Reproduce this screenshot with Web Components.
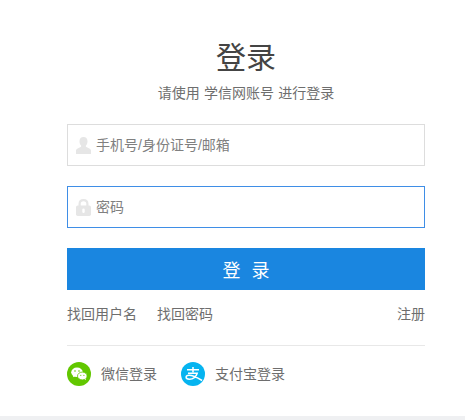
<!DOCTYPE html>
<html lang="zh"><head><meta charset="utf-8"><title>登录</title>
<style>
html,body{margin:0;padding:0;background:#fff}
body{width:465px;height:420px;overflow:hidden;font-family:"Noto Sans CJK SC","Liberation Sans",sans-serif;color:#666}
</style></head><body>
<login-page>
  <login-heading title-text="登录" sub="请使用 学信网账号 进行登录"></login-heading>
  <login-field icon="user" placeholder="手机号/身份证号/邮箱"></login-field>
  <login-field icon="lock" placeholder="密码" focused></login-field>
  <login-button>登 录</login-button>
  <login-links></login-links>
  <login-social></login-social>
</login-page>
<script>
function def(name, html){
  customElements.define(name, class extends HTMLElement{
    connectedCallback(){
      if(this.shadowRoot) return;
      const r=this.attachShadow({mode:"open"});
      r.innerHTML=typeof html==="function"?html(this):html;
    }
  });
}
def("login-page",`<style>
:host{display:flex;flex-direction:column;box-sizing:border-box;width:465px;height:420px;padding:0 40px 4px 67px;position:relative}
.band{position:absolute;left:0;right:0;bottom:0;height:4px;background:#eff0f2}
</style><slot></slot><div class="band"></div>`);
def("login-heading",el=>`<style>
:host{display:flex;flex-direction:column;align-items:center;height:124px;box-sizing:border-box;padding-top:34px}
h1{margin:0;font:400 30px/42px "Noto Sans CJK SC",sans-serif;color:#444}
p{margin:5px 0 0;font:400 14px/22px "Noto Sans CJK SC",sans-serif;color:#6e6e6e;word-spacing:1px}
</style><h1>${el.getAttribute("title-text")}</h1><p>${el.getAttribute("sub")}</p>`);
const icons={
 user:`<svg width="15" height="17" viewBox="0 0 15 17"><path fill="#e6e6e6" d="M7.500 0C10 0 11.500 1.500 11.500 4.200c0 1.800-.6 3.300-1.500 4.300-.4.500-.2 1.200.4 1.500l3 1.400c1 .5 1.600 1.200 1.600 2.200V17H0v-3.400c0-1 .6-1.700 1.600-2.200l3-1.400c.6-.3.800-1 .4-1.500-.9-1-1.500-2.500-1.500-4.300C3.500 1.500 5 0 7.500 0z"/></svg>`,
 lock:`<svg width="15" height="17" viewBox="0 0 15 17"><path fill="none" stroke="#e6e6e6" stroke-width="2.200" d="M3.600 8V4.800C3.600 2.500 5.200 1.100 7.500 1.100s3.900 1.400 3.900 3.700V8"/><rect y="6.500" width="15" height="10.500" rx="1.800" fill="#e6e6e6"/><rect x="6.300" y="9.500" width="2.400" height="4.500" rx="1.200" fill="#fff"/></svg>`
};
def("login-field",el=>`<style>
:host{display:flex;align-items:center;box-sizing:border-box;height:42px;margin-bottom:20px;padding-left:8px;gap:5px;background:#fff;border:1px solid ${el.hasAttribute("focused")?"#3f8ee6":"#ddd"}}
.i{width:15px;display:flex;justify-content:center;flex:none}
svg{display:block}
span{font:400 14px/20px "Liberation Sans","Noto Sans CJK SC",sans-serif;color:#808080}
</style><div class="i">${icons[el.getAttribute("icon")]}</div><span>${el.getAttribute("placeholder")}</span>`);
def("login-button",`<style>
:host{display:flex;align-items:center;justify-content:center;height:42px;background:#1a86e0;color:#fff;font:400 18px/42px "Noto Sans CJK SC",sans-serif;white-space:pre;word-spacing:7px}
</style><slot></slot>`);
def("login-links",`<style>
:host{display:flex;gap:20px;box-sizing:border-box;height:56px;padding-top:13px;border-bottom:1px solid #e8e8e8;font:400 14px/20px "Noto Sans CJK SC",sans-serif;color:#6e6e6e}
.r{margin-left:auto}
</style><span>找回用户名</span><span>找回密码</span><span class="r">注册</span>`);
def("login-social",`<style>
:host{display:flex;align-items:flex-start;height:24px;margin-top:16px;font:400 14px/23px "Noto Sans CJK SC",sans-serif;color:#6e6e6e}
svg{display:block;flex:none;margin-right:10px}
span{margin-right:24px}
</style>
<svg width="24" height="24" viewBox="0 0 24 24"><circle cx="12" cy="12" r="12" fill="#62c700"/>
<ellipse cx="10" cy="10.300" rx="5.800" ry="4.800" fill="#fff"/><path fill="#fff" d="M6.500 13l-.6 2.300 2.600-1.300z"/>
<ellipse cx="15.300" cy="14" rx="4.800" ry="3.900" fill="#fff" stroke="#62c700" stroke-width=".8"/><path fill="#fff" d="M17.500 17l1.500 1.300-.3-2z"/>
<circle cx="8" cy="9" r=".8" fill="#62c700"/><circle cx="12" cy="9" r=".8" fill="#62c700"/><circle cx="13.800" cy="13.300" r=".6" fill="#62c700"/><circle cx="16.900" cy="13.300" r=".6" fill="#62c700"/></svg>
<span>微信登录</span>
<svg width="24" height="24" viewBox="0 0 24 24"><circle cx="12" cy="12" r="12" fill="#06b4f0"/>
<path fill="none" stroke="#fff" stroke-width="1.500" d="M6 7.800h12M12 5v5.200M7 11.200h9.200c-1 3.200-4 6-7.800 6-2 0-3.300-.7-3.300-1.900 0-1.300 1.300-2 3-2 3 0 7.500 2 13 5.200"/></svg>
<span>支付宝登录</span>`);
</script>
</body></html>
